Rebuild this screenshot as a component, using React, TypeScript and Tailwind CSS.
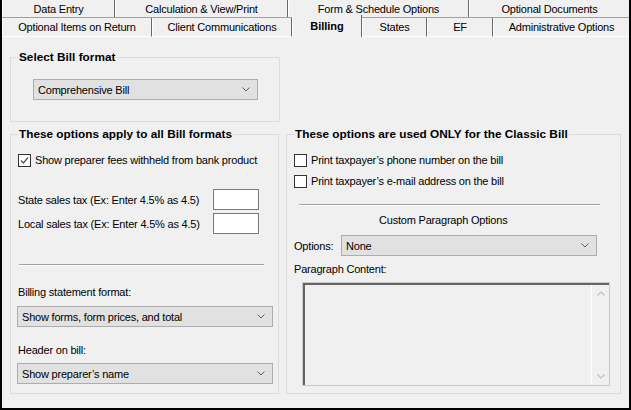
import React from "react";

const font = "font-['Liberation_Sans',Arial,sans-serif]";

function Chevron() {
  return (
    <svg width="8" height="5" viewBox="0 0 8 5" className="shrink-0">
      <polyline points="0.5,0.5 4,4 7.5,0.5" fill="none" stroke="#606060" strokeWidth="1" />
    </svg>
  );
}

function Select({ value, className = "" }: { value: string; className?: string }) {
  return (
    <div
      className={`flex h-[21px] items-center justify-between border border-[#adadad] bg-[#e1e1e1] pl-[4px] pr-[7px] ${className}`}
    >
      <span>{value}</span>
      <Chevron />
    </div>
  );
}

function Checkbox({ checked = false, label }: { checked?: boolean; label: string }) {
  return (
    <div className="flex h-[13px] items-center">
      <div className="flex h-[13px] w-[13px] shrink-0 items-center justify-center border border-[#333333] bg-white">
        {checked ? (
          <svg width="9" height="9" viewBox="0 0 9 9">
            <polyline points="1,4.5 3.5,7 8,1.5" fill="none" stroke="#555555" strokeWidth="1.3" />
          </svg>
        ) : null}
      </div>
      <span className="ml-[4px] -mt-[2px]">{label}</span>
    </div>
  );
}

function Tab({ label, className = "" }: { label: string; className?: string }) {
  return (
    <div
      className={`flex items-center justify-center border-l border-r border-l-white border-r-[#696969] ${className}`}
    >
      {label}
    </div>
  );
}

export default function App() {
  return (
    <div
      className={`${font} flex h-[410px] w-[631px] flex-col border-x-2 border-b-2 border-black bg-[#f0f0f0] text-[11px] leading-[14px] tracking-[-0.2px] text-black`}
    >
      {/* tab rows */}
      <div className="flex h-[18px] border-b border-[#a0a0a0]">
        <Tab label="Data Entry" className="w-[113px]" />
        <Tab label="Calculation & View/Print" className="w-[173px]" />
        <Tab label="Form & Schedule Options" className="w-[181px]" />
        <Tab label="Optional Documents" className="flex-1 border-r-0" />
      </div>
      <div className="flex h-[19px]">
        <Tab label="Optional Items on Return" className="w-[150px] border-b border-b-white" />
        <Tab label="Client Communications" className="w-[140px] border-b border-b-white" />
        <div className="relative z-10 -mt-[3px] flex w-[70px] items-center justify-center border-l border-r border-l-white border-r-[#696969] bg-[#f0f0f0] text-[11px] font-bold tracking-normal">
          Billing
        </div>
        <Tab label="States" className="w-[65px] border-b border-b-white" />
        <Tab label="EF" className="w-[66px] border-b border-b-white" />
        <Tab label="Administrative Options" className="flex-1 border-r-0 border-b border-b-white" />
      </div>

      {/* panel */}
      <div className="flex-1 px-[8px]">
        <fieldset className="mt-[13px] h-[72px] w-[270px] border border-[#dcdcdc]">
          <legend className="ml-[7px] px-[1px] text-[11.8px] font-bold leading-[14px] tracking-normal">Select Bill format</legend>
          <div className="pl-[22px] pt-[15px]">
            <Select value="Comprehensive Bill" className="w-[225px]" />
          </div>
        </fieldset>

        <div className="mt-[5px] flex gap-[7px]">
          <fieldset className="h-[267px] w-[270px] border border-[#dcdcdc]">
            <legend className="ml-[7px] px-[1px] text-[11.8px] font-bold leading-[14px] tracking-normal">
              These options apply to all Bill formats
            </legend>
            <div className="flex flex-col pl-[7px] pr-[5px]">
              <div className="mt-[13px]">
                <Checkbox checked label="Show preparer fees withheld from bank product" />
              </div>
              <div className="mt-[22px] flex h-[21px] items-center justify-between pr-[14px]">
                <span>State sales tax (Ex: Enter 4.5% as 4.5)</span>
                <div className="h-[21px] w-[46px] border border-[#7a7a7a] bg-white" />
              </div>
              <div className="mt-[3px] flex h-[21px] items-center justify-between pr-[14px]">
                <span>Local sales tax (Ex: Enter 4.5% as 4.5)</span>
                <div className="h-[21px] w-[46px] border border-[#7a7a7a] bg-white" />
              </div>
              <div className="ml-[1px] mr-[9px] mt-[30px] border-t border-b border-t-[#a0a0a0] border-b-white" />
              <div className="mt-[19px]">Billing statement format:</div>
              <Select value="Show forms, form prices, and total" className="mt-[7px] w-[256px] -ml-[1px]" />
              <div className="mt-[16px]">Header on bill:</div>
              <Select value="Show preparer’s name" className="mt-[6px] w-[256px] -ml-[1px]" />
            </div>
          </fieldset>

          <fieldset className="h-[267px] w-[338px] border border-[#dcdcdc]">
            <legend className="ml-[7px] px-[1px] text-[11.8px] font-bold leading-[14px] tracking-normal">
              These options are used ONLY for the Classic Bill
            </legend>
            <div className="flex flex-col pl-[7px]">
              <div className="mt-[13px]">
                <Checkbox label="Print taxpayer’s phone number on the bill" />
              </div>
              <div className="mt-[8px]">
                <Checkbox label="Print taxpayer’s e-mail address on the bill" />
              </div>
              <div className="ml-[5px] mr-[20px] mt-[16px] border-t border-b border-t-[#a0a0a0] border-b-white" />
              <div className="mt-[7px] pl-[85px]">Custom Paragraph Options</div>
              <div className="mt-[8px] flex items-center">
                <span className="w-[47px]">Options:</span>
                <Select value="None" className="w-[256px]" />
              </div>
              <div className="mt-[6px]">Paragraph Content:</div>
              <div className="ml-[8px] mt-[6px] h-[104px] w-[308px] border border-[#c8c8c8]">
                <div className="flex h-full border-l-2 border-t-2 border-l-[#646464] border-t-[#646464]">
                  <div className="flex-1" />
                  <div className="flex w-[18px] flex-col items-center justify-between border-l border-white py-[6px]">
                    <svg width="8" height="5" viewBox="0 0 8 5">
                      <polyline points="0.5,4.5 4,1 7.5,4.5" fill="none" stroke="#c0c0c0" strokeWidth="1.2" />
                    </svg>
                    <svg width="8" height="5" viewBox="0 0 8 5">
                      <polyline points="0.5,0.5 4,4 7.5,0.5" fill="none" stroke="#c0c0c0" strokeWidth="1.2" />
                    </svg>
                  </div>
                </div>
              </div>
            </div>
          </fieldset>
        </div>
      </div>
    </div>
  );
}
